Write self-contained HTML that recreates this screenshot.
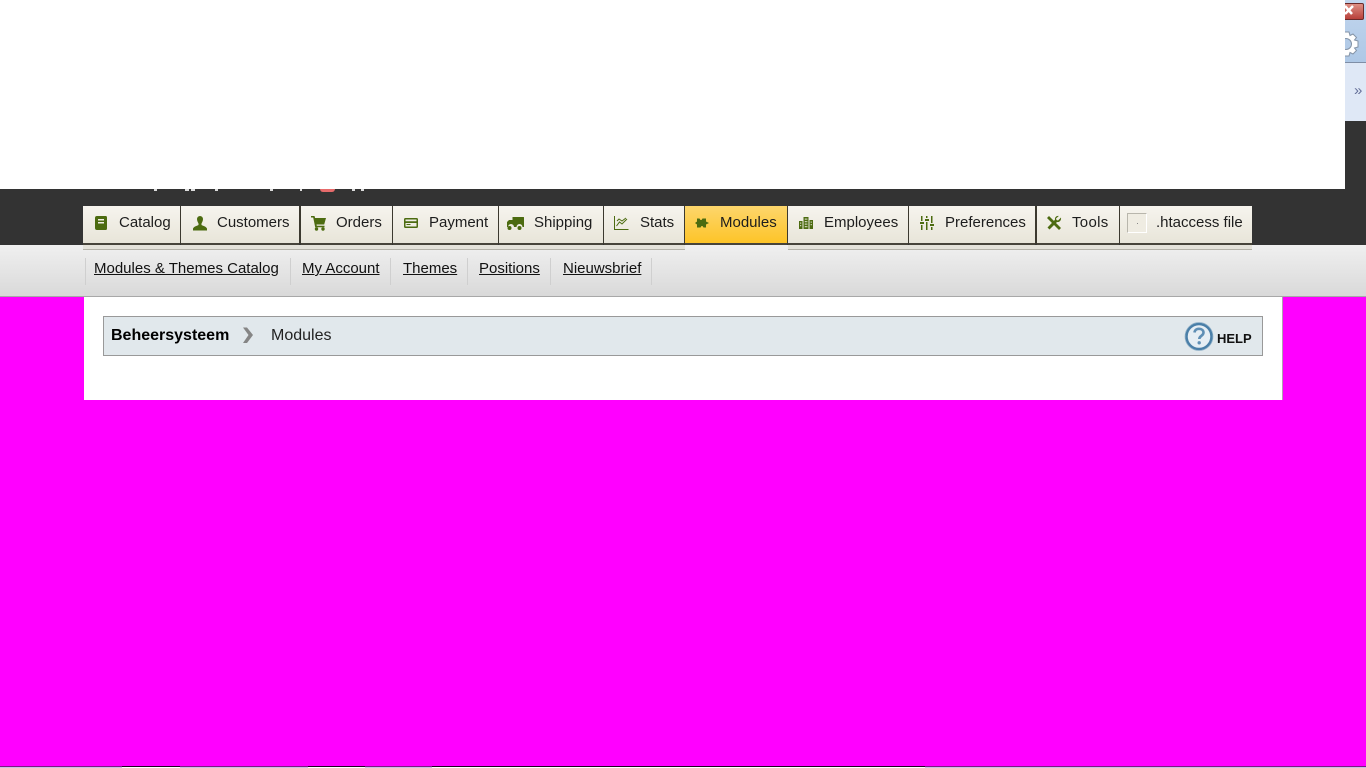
<!DOCTYPE html>
<html><head><meta charset="utf-8"><title>Modules</title>
<style>
html,body{margin:0;padding:0;width:1366px;height:768px;overflow:hidden;background:#f0f;font-family:"Liberation Sans",sans-serif;color:#1a1a1a}
div,span,a{position:absolute;display:block;white-space:nowrap}
.t{top:206px;height:37px;background:linear-gradient(#f6f4ee,#e8e5d9);border-bottom:2px solid #47443a}
.u{top:245px;height:4px;background:#e4e2d9;border-bottom:1px solid #b4b2a8}
.l{top:213px;font-size:15px;line-height:20px;color:#1d1d1d}
.d{top:206px;height:38px;background:#3c392f}
.n{top:259px;font-size:15px;line-height:20px;color:#111;text-decoration:underline}
.p{top:258px;width:1px;height:27px;background:#cfcfcf}
.m{top:189px;height:2px;background:#ddd}
.b{top:767px;height:1px;background:#c9bfe6}
</style></head><body>
<div style="left:0;top:189px;width:1366px;height:56px;background:#333"></div>
<div style="left:1345px;top:120px;width:21px;height:69px;background:#333"></div>
<div style="left:0;top:0;width:1345px;height:189px;background:#fff"></div>
<div class="m" style="left:154px;width:3px"></div><div class="m" style="left:185px;width:4px"></div><div class="m" style="left:191px;width:4px"></div><div class="m" style="left:215px;width:3px"></div><div class="m" style="left:270px;width:3px"></div><div class="m" style="left:300px;width:2px"></div><div class="m" style="left:352px;width:3px"></div><div class="m" style="left:361px;width:3px"></div>
<div style="left:320px;top:189px;width:15px;height:3px;background:#e66b6b;border-radius:0 0 7px 7px"></div>

<div style="left:1345px;top:0;width:21px;height:62px;background:linear-gradient(#c2d6ee,#aec8e6);border-bottom:1px solid #7f8ea6"></div>
<div style="left:1345px;top:63px;width:21px;height:58px;background:#dfe8f6"></div>
<div style="left:1345px;top:3px;width:18px;height:15px;background:linear-gradient(#dd8f84,#b8403a);border:1px solid #6a2a2a;border-left:0;border-radius:0 2px 2px 0"></div>
<div style="left:1354px;top:83px;font-size:15px;line-height:16px;color:#667099">»</div>

<svg width="21" height="62" viewBox="1345 0 21 62" style="position:absolute;left:1345px;top:0;overflow:hidden">
<g transform="translate(1346 44)" fill="#fff" stroke="#8493a6" stroke-width="1">
<path d="M-3-12H3L4-8.500 7-10 10.500-6.500 8.500-4 12-3V3L8.500 4 10.500 6.500 7 10 4 8.500 3 12H-3L-4 8.500-7 10-10.500 6.500-8.500 4-12 3V-3L-8.500-4-10.500-6.500-7-10-4-8.500Z"/>
<circle r="5.500" fill="#b3cbe7"/></g>
<path d="M1345 6l7 8M1353 6l-8 8" stroke="#fff" stroke-width="2.500" fill="none"/>
</svg>

<div style="left:0;top:245px;width:1366px;height:51px;background:linear-gradient(#f0f0f0,#d9d9d9);border-bottom:1px solid #a8a8a8"></div>

<div class="u" style="left:83px;width:602px"></div><div class="u" style="left:788px;width:464px"></div>
<div class="t" style="left:83px;width:97px"></div><div class="t" style="left:181px;width:118px"></div><div class="t" style="left:301px;width:91px"></div><div class="t" style="left:393px;width:105px"></div><div class="t" style="left:499px;width:104px"></div><div class="t" style="left:604px;width:80px"></div>
<div class="t" style="left:685px;width:102px;background:linear-gradient(#fdd66c,#fdc428)"></div>
<div class="t" style="left:788px;width:120px"></div><div class="t" style="left:909px;width:126px"></div><div class="t" style="left:1037px;width:82px"></div><div class="t" style="left:1120px;width:132px"></div>
<div class="d" style="left:180px;width:1px"></div><div class="d" style="left:299px;width:2px"></div><div class="d" style="left:392px;width:1px"></div><div class="d" style="left:498px;width:1px"></div><div class="d" style="left:603px;width:1px"></div><div class="d" style="left:684px;width:1px"></div><div class="d" style="left:787px;width:1px"></div><div class="d" style="left:908px;width:1px"></div><div class="d" style="left:1035px;width:2px"></div><div class="d" style="left:1119px;width:1px"></div>

<span class="l" style="left:119px">Catalog</span>
<span class="l" style="left:217px">Customers</span>
<span class="l" style="left:336px">Orders</span>
<span class="l" style="left:429px">Payment</span>
<span class="l" style="left:534px">Shipping</span>
<span class="l" style="left:640px">Stats</span>
<span class="l" style="left:720px">Modules</span>
<span class="l" style="left:824px">Employees</span>
<span class="l" style="left:945px">Preferences</span>
<span class="l" style="left:1072px;letter-spacing:.3px">Tools</span>
<span class="l" style="left:1156px">.htaccess file</span>

<div class="p" style="left:85px"></div><div class="p" style="left:290px"></div><div class="p" style="left:390px"></div><div class="p" style="left:467px"></div><div class="p" style="left:550px"></div><div class="p" style="left:651px"></div>
<a class="n" style="left:94px">Modules &amp; Themes Catalog</a>
<a class="n" style="left:302px">My Account</a>
<a class="n" style="left:403px">Themes</a>
<a class="n" style="left:479px">Positions</a>
<a class="n" style="left:563px">Nieuwsbrief</a>

<div style="left:84px;top:297px;width:1198px;height:103px;background:#fff;border-right:1px solid #b0a0b0"></div>
<div style="left:103px;top:316px;width:1158px;height:38px;background:#e1e8ec;border:1px solid #999"></div>
<span style="left:111px;top:326px;font-size:16px;line-height:20px;font-weight:bold;color:#000">Beheersysteem</span>
<span style="left:271px;top:326px;font-size:16px;line-height:20px;color:#222">Modules</span>
<span style="left:1217px;top:331px;font-size:13px;line-height:16px;font-weight:bold;color:#111">HELP</span>

<svg width="1366" height="768" viewBox="0 0 1366 768" style="position:absolute;left:0;top:0">
<g fill="#4c6b10">
<!-- catalog -->
<path fill-rule="evenodd" d="M97 216h9a1.500 1.500 0 0 1 1 1.500v11a1.500 1.500 0 0 1-1 1.500h-9a2 2 0 0 1-2-2v-10a2 2 0 0 1 2-2zm1 3v1.500h6V219zm0 3v1.500h6V222z"/>
<!-- customer -->
<path d="M200 216a3 3 0 0 1 3 3c0 2-1 3.500-1.500 4.500v1.500c2 1 4.500 1.500 5.500 3.500v2h-14v-2c1-2 3.500-2.500 5.500-3.500v-1.500c-.5-1-1.500-2.500-1.500-4.500a3 3 0 0 1 3-3z"/>
<!-- cart -->
<path d="M311 216h3.500l.6 2H326l-1.800 6.500h-7.700l.3 1.300h7.700v1.500h-9.300L313.200 217.500H311z"/><circle cx="316.500" cy="229" r="1.700"/><circle cx="323" cy="229" r="1.700"/>
<!-- payment -->
<path fill-rule="evenodd" d="M405.500 218h11a1.500 1.500 0 0 1 1.500 1.500v7a1.500 1.500 0 0 1-1.500 1.500h-11a1.500 1.500 0 0 1-1.500-1.500v-7a1.500 1.500 0 0 1 1.500-1.500zm0 1.500v1.800h11v-1.800zm0 3.500v3.500h11V223zm1 1h4v1h-4z"/>
<!-- truck -->
<path d="M512.500 217h11a.5.500 0 0 1 .5.500V227h-1.500a3 3 0 0 0-6 0h-2.500a3 3 0 0 0-6 0H507v-5l2-2h3.500z"/><circle cx="509.500" cy="228" r="2"/><circle cx="519.500" cy="228" r="2"/>
<!-- modules puzzle -->
<path d="M695 223l2-1.500v-3h2.500l1 1.500h1l1-1.500H706v3l3 1.500-3 1.500v3h-2.500l-1-1.500h-1l-1 1.500H697v-3z"/>
<!-- employees -->
<path fill-rule="evenodd" d="M799 221h3.500v8H799zM803.500 217h5v12h-5zM809.500 220h3.500v9h-3.500zM804.800 218.500v1.300h1v-1.300zm1.500 0v1.300h1v-1.300zm-1.500 2.500v1.300h1V221zm1.500 0v1.300h1V221zm-1.500 2.500v1.300h1v-1.300zm1.500 0v1.300h1v-1.300zm-1.500 2.500v1.300h1V226zm1.500 0v1.300h1V226zM800.200 222.500v1.300h1v-1.300zm0 2.500v1.300h1V225zm10.500-3.500v1.300h1v-1.300zm0 2.500v1.300h1V224z"/>
<!-- preferences -->
<path d="M921 216h1.500v5H921zM920 222h4v2h-4zM921 225h1.500v5H921zM926 216h1.500v2H926zM925 219h4v2h-4zM926 222h1.500v8H926zM931 216h1.500v7H931zM930 224h4v2h-4zM931 227h1.500v3H931z"/>
<!-- tools -->
<path d="M1047 218l2-2 12 12-2 2z"/><path d="M1061 217.500l-3 3-1.500-.5-.5-1.500 2.800-2.500c-2-.5-4.300 1.300-3.800 3.800L1047.500 227.500l2 2 7.500-7.500c2.500.5 4.500-1.800 4-4.500z"/>
</g>
<!-- stats -->
<g fill="none" stroke="#4c6b10" stroke-width="1">
<path d="M614.500 216v13.500H628.500"/><path d="M616.500 226l3-4 2.500 2 5-5M617 221l2-2 3 2 4-3"/>
</g>
<!-- broken image -->
<rect x="1127.500" y="213.500" width="19" height="19" fill="#efece2" stroke="#fff"/>
<path d="M1127.500 232.500v-19h19" fill="none" stroke="#b8b6ac"/>
<rect x="1137" y="223" width="1" height="1" fill="#888"/>
<!-- chevron -->
<path d="M243 327.500h4l6 7.500-6 8h-4l5.500-8z" fill="#858585"/>
<!-- help -->
<circle cx="1199" cy="336.500" r="12.500" fill="#e6eef4" stroke="#4a7fa8" stroke-width="2.500"/>
<circle cx="1199" cy="336.500" r="14" fill="none" stroke="#8fb0c8" stroke-width=".7"/>
<path d="M1194.500 332.500c.3-2.500 2.300-3.700 4.500-3.700 2.600 0 4.500 1.500 4.500 3.800 0 3.200-4.200 3.200-4.200 6.400" fill="none" stroke="#5f8fb5" stroke-width="2.600"/>
<circle cx="1199.200" cy="342.800" r="1.700" fill="#5f8fb5"/>
</svg>

<div style="left:0;top:766px;width:1366px;height:1px;background:#7a1a80"></div>
<div style="left:122px;top:766px;width:58px;height:1px;background:#200020"></div>
<div style="left:308px;top:766px;width:57px;height:1px;background:#200020"></div>
<div style="left:432px;top:766px;width:493px;height:1px;background:#200020"></div>
<div style="left:0;top:767px;width:1366px;height:1px;background:#fff"></div>
<div class="b" style="left:0;width:122px"></div><div class="b" style="left:180px;width:128px"></div><div class="b" style="left:365px;width:67px"></div><div class="b" style="left:925px;width:441px"></div>
</body></html>
